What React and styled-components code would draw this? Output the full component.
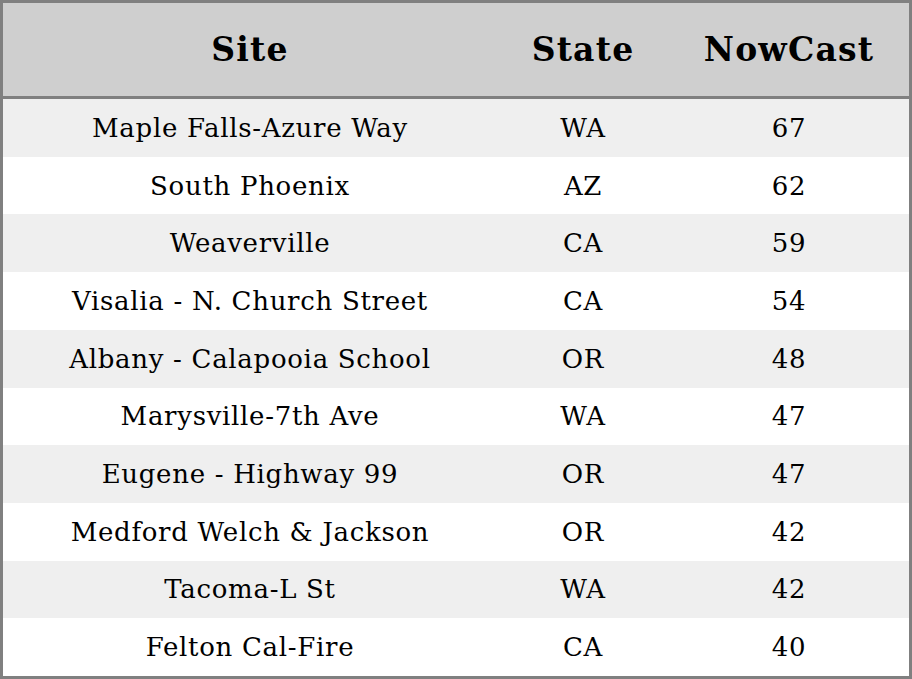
import styled, { createGlobalStyle } from "styled-components";

const rows = [
    ["Maple Falls-Azure Way", "WA", 67],
    ["South Phoenix", "AZ", 62],
    ["Weaverville", "CA", 59],
    ["Visalia - N. Church Street", "CA", 54],
    ["Albany - Calapooia School", "OR", 48],
    ["Marysville-7th Ave", "WA", 47],
    ["Eugene - Highway 99", "OR", 47],
    ["Medford Welch & Jackson", "OR", 42],
    ["Tacoma-L St", "WA", 42],
    ["Felton Cal-Fire", "CA", 40],
];

export default function App() {
    return (
        <>
            <GlobalStyle />
            <Table>
                <HeaderRow>
                    <HeadCell>Site</HeadCell>
                    <HeadCell>State</HeadCell>
                    <HeadCell>NowCast</HeadCell>
                </HeaderRow>
                {rows.map(([site, state, value], i) => (
                    <Row key={site} $shaded={i % 2 === 0}>
                        <Cell>{site}</Cell>
                        <Cell>{state}</Cell>
                        <Cell>{value}</Cell>
                    </Row>
                ))}
            </Table>
        </>
    );
}

const GlobalStyle = createGlobalStyle`
    html, body {
        margin: 0;
        padding: 0;
        background: #ffffff;
    }
    * {
        box-sizing: border-box;
    }
`;

const Table = styled.div`
    width: 912px;
    height: 679px;
    border: 3px solid #808080;
    display: grid;
    grid-template-rows: 96px repeat(10, 1fr);
    font-family: "DejaVu Serif", "Liberation Serif", serif;
    color: #000000;
`;

const HeaderRow = styled.div`
    display: grid;
    grid-template-columns: 494px 172px 1fr;
    background: #cfcfcf;
    border-bottom: 3px solid #808080;
`;

const HeadCell = styled.div`
    display: flex;
    align-items: center;
    justify-content: center;
    font-size: 33px;
    font-weight: bold;
    letter-spacing: 1.2px;
`;

const Row = styled.div`
    display: grid;
    grid-template-columns: 494px 172px 1fr;
    background: ${(p) => (p.$shaded ? "#efefef" : "#ffffff")};
`;

const Cell = styled.div`
    display: flex;
    align-items: center;
    justify-content: center;
    font-size: 26px;
    letter-spacing: 0.7px;
`;
